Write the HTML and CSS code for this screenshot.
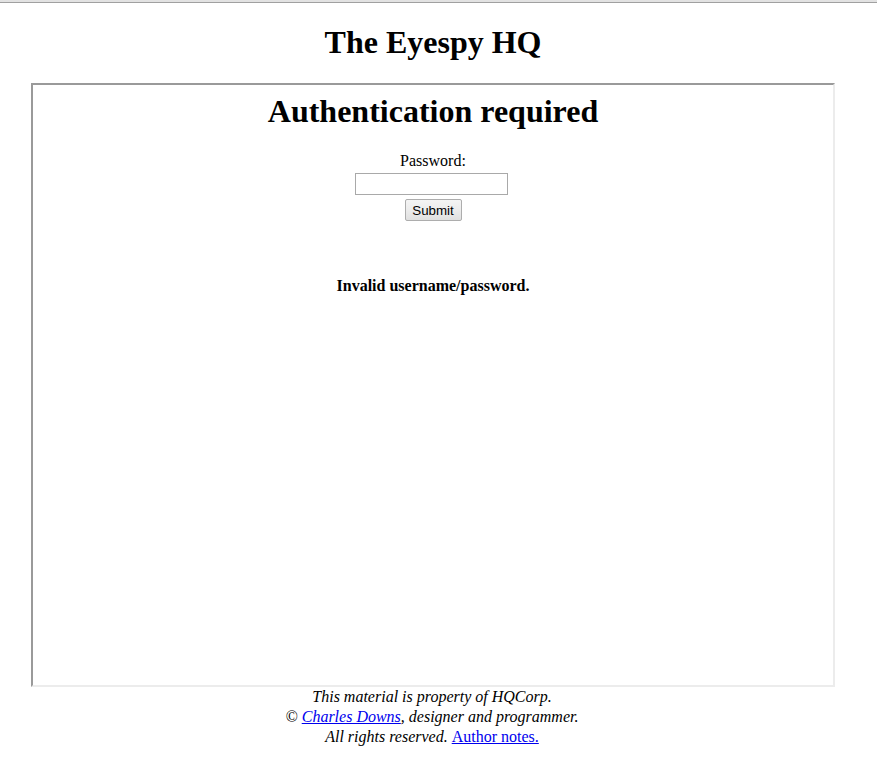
FILE: index.html
```html
<!DOCTYPE html>
<html>
<head>
<meta charset="utf-8">
<title>The Eyespy HQ</title>
<link rel="stylesheet" href="styles.css">
</head>
<body>
<div class="topline"></div>
<div class="page">
  <h1 class="title">The Eyespy HQ</h1>
  <div class="frame">
    <h1 class="auth-title">Authentication required</h1>
    <form class="login">
      <label class="pw-label" for="pw">Password:</label>
      <input class="pw-input" id="pw" type="password">
      <button class="submit" type="button">Submit</button>
    </form>
    <p class="error">Invalid username/password.</p>
  </div>
  <div class="footer">
    <div class="fline">This material is property of HQCorp.</div>
    <div class="fline">© <a href="#">Charles Downs</a>, designer and programmer.</div>
    <div class="fline">All rights reserved. <a href="#" class="plain">Author notes.</a></div>
  </div>
</div>
</body>
</html>
```

FILE: styles.css
```css
html, body {
  margin: 0;
  padding: 0;
  background: #ffffff;
}
body {
  font-family: "Liberation Serif", "Times New Roman", serif;
  font-size: 16px;
  color: #000;
}
.topline {
  height: 0;
  border-top: 2px solid #e2e2e2;
  border-bottom: 1px solid #a0a0a0;
}
.page {
  width: 866px;
  display: flex;
  flex-direction: column;
  align-items: center;
}
.title {
  margin: 21px 0 22px;
  font-size: 32px;
  line-height: 37px;
  font-weight: bold;
}
.frame {
  width: 800px;
  height: 592px;
  padding-top: 8px;
  border-style: solid;
  border-width: 2px;
  border-color: #9a9a9a #ececec #ececec #9a9a9a;
  display: flex;
  flex-direction: column;
  align-items: center;
}
.auth-title {
  margin: 0;
  font-size: 32px;
  line-height: 37px;
  font-weight: bold;
}
.login {
  margin-top: 22px;
  display: flex;
  flex-direction: column;
  align-items: center;
}
.pw-label {
  line-height: 18px;
}
.pw-input {
  margin: 3px 4px 0 0;
  box-sizing: border-box;
  width: 153px;
  height: 22px;
  border: 1px solid #a9a9a9;
  padding: 1px 2px;
  background: #fff;
}
.submit {
  margin-top: 4px;
  box-sizing: border-box;
  width: 57px;
  height: 22px;
  padding: 0;
  font-family: "Liberation Sans", Arial, sans-serif;
  font-size: 13.33px;
  color: #000;
  border: 1px solid #adadad;
  border-radius: 2px;
  background: linear-gradient(#f4f4f4, #ececec 50%, #e0e0e0);
}
.error {
  margin: 56px 0 0;
  line-height: 18px;
  font-weight: bold;
}
.footer {
  display: flex;
  flex-direction: column;
  align-items: center;
  font-style: italic;
  padding-right: 2px;
}
.fline {
  line-height: 20px;
}
.footer a {
  color: #0000ee;
  text-decoration: underline;
}
.footer a.plain {
  font-style: normal;
}
```
